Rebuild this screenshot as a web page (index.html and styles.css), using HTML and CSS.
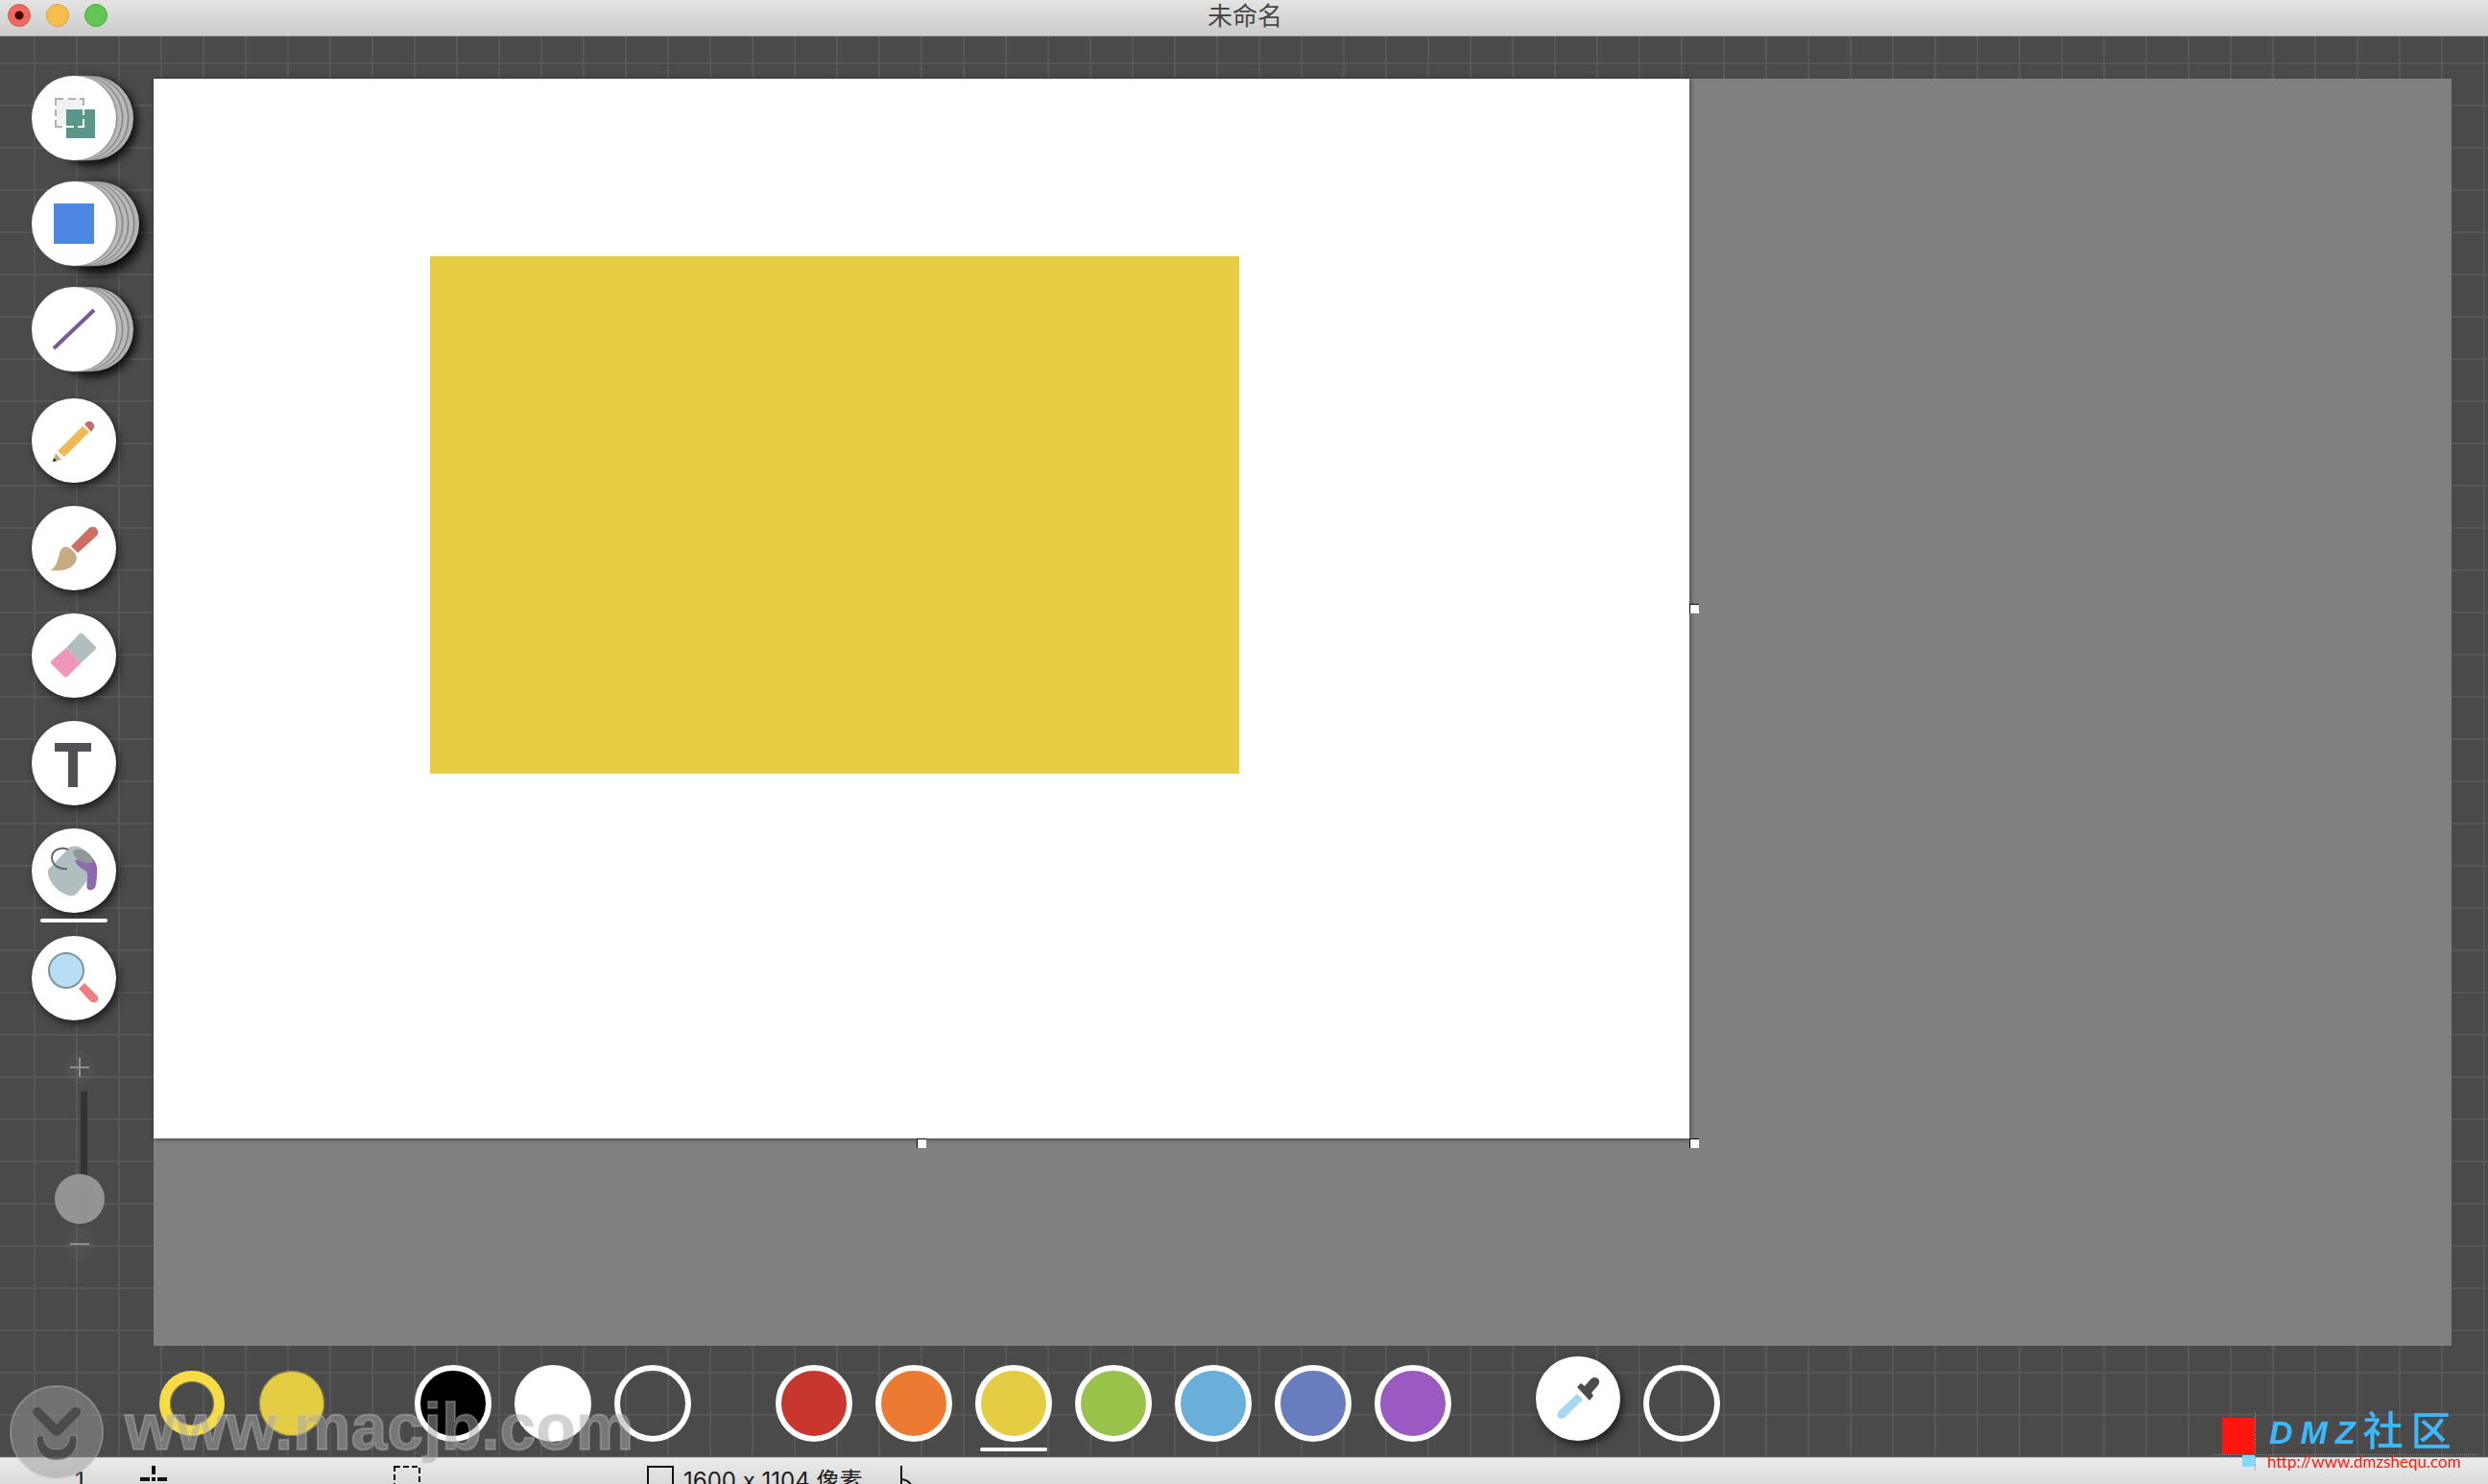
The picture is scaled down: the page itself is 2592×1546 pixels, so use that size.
FILE: index.html
```html
<!DOCTYPE html>
<html lang="zh-CN">
<head>
<meta charset="utf-8">
<title>未命名</title>
<link rel="stylesheet" href="styles.css">
</head>
<body>
<header class="titlebar">
  <div class="lights">
    <button class="light light-close" aria-label="关闭"></button>
    <button class="light light-min" aria-label="最小化"></button>
    <button class="light light-max" aria-label="缩放"></button>
  </div>
  <h1 class="title">未命名</h1>
</header>

<main class="workspace">
  <nav class="tools" aria-label="工具">
    <div class="tool-group stacks">
      <button class="tool stack" aria-label="选择">
        <svg viewBox="0 0 88 88"><rect x="25" y="24" width="28" height="27" fill="#eef2f2"/><path d="M36 35h30v30H36z" fill="#58978a"/><path d="M25 31v-7h8M38 24h8M50 24h4v7M25 35v7M25 46v7h7" fill="none" stroke="#a9b5b4" stroke-width="2"/><path d="M54 35v6M54 45v8h-6M44 53h-8" fill="none" stroke="#fff" stroke-width="2"/></svg>
      </button>
      <button class="tool stack stack-deep" aria-label="矩形">
        <svg viewBox="0 0 88 88"><path d="M23 23h42v42H23z" fill="#4f86e3"/></svg>
      </button>
      <button class="tool stack" aria-label="直线">
        <svg viewBox="0 0 88 88"><path d="M23 64 65 24" stroke="#7a5a95" stroke-width="4"/></svg>
      </button>
    </div>
    <div class="tool-group">
      <button class="tool" aria-label="铅笔">
        <svg viewBox="0 0 88 88"><path d="m27 55 26-26 7 6-26 26z" fill="#f0b954"/><path d="m55 27 2-2c4-4 11 3 7 7l-2 3z" fill="#c76d69"/><path d="m25 57 6 7-9 2z" fill="#c9a981"/><path d="m23 62 3 3-4 1z" fill="#222"/></svg>
      </button>
      <button class="tool" aria-label="画笔">
        <svg viewBox="0 0 88 88"><path d="m41 42 19-19c5-4 12 2 8 8L48 49z" fill="#cd6e65"/><path d="M29 49c2-8 9-8 14-2 6 5 4 11 0 15-6 6-17 6-24 5 6-2 8-9 10-18z" fill="#c8ab82"/></svg>
      </button>
      <button class="tool" aria-label="橡皮">
        <svg viewBox="0 0 88 88"><path d="M36 36 49 22q2-3 5 0l12 12q2 2 0 4L51 52z" fill="#b0bebf"/><path d="M36 36 51 52 38 65q-3 3-5 0L21 53q-2-2 0-4z" fill="#f096bb"/></svg>
      </button>
      <button class="tool" aria-label="文字">
        <svg viewBox="0 0 88 88"><path d="M24 23h38v9H48v37H38V32H24z" fill="#515156"/></svg>
      </button>
      <button class="tool active" aria-label="填充">
        <svg viewBox="0 0 88 88"><path d="M39 20q7-4 17 3c9 7 13 16 12 24l-9 6-12 15q-4 4-11 1C27 66 18 56 17 47q-1-4 3-7z" fill="#b0bebf"/><path d="M45 33c2 6 6 8 12 12 3 4-1 14 1 18q4 3 8-1c2-6 2-12 2-21-1-5-2-8-6-10z" fill="#8c6aae"/><path d="M43 24c3-6 20 0 21 11-7 3-20-1-21-11z" fill="#8f9898"/><path d="M38 22c-10-4-17 2-17 9 1 8 8 12 16 11" fill="none" stroke="#626769" stroke-width="2"/></svg>
      </button>
      <button class="tool" aria-label="放大镜">
        <svg viewBox="0 0 88 88"><circle cx="36" cy="36" r="18" fill="#b8def5" stroke="#809499" stroke-width="2"/><path d="m49 55 6-6 13 13c4 5-2 10-7 6z" fill="#ea817e"/></svg>
      </button>
    </div>
    <div class="zoom">
      <button class="zoom-step" aria-label="放大"><svg viewBox="0 0 34 34"><path d="M7 17h20M17 7v20"/></svg></button>
      <input class="zoom-range" type="range" min="0" max="100" value="0" aria-label="缩放级别">
      <button class="zoom-step" aria-label="缩小"><svg viewBox="0 0 34 34"><path d="M7 17h20"/></svg></button>
    </div>
  </nav>

  <section class="board" aria-label="画布">
    <div class="paper">
      <div class="shape"></div>
      <i class="handle handle-e"></i>
      <i class="handle handle-s"></i>
      <i class="handle handle-se"></i>
    </div>
  </section>

  <div class="palette">
    <div class="swatches">
      <button class="current current-stroke" aria-label="描边颜色"></button>
      <button class="current current-fill" aria-label="填充颜色"></button>
    </div>
    <div class="swatches">
      <button class="swatch black" aria-label="黑色"></button>
      <button class="swatch white" aria-label="白色"></button>
      <button class="swatch" aria-label="透明"></button>
    </div>
    <div class="swatches">
      <button class="swatch red" aria-label="红色"></button>
      <button class="swatch orange" aria-label="橙色"></button>
      <button class="swatch yellow active" aria-label="黄色"></button>
      <button class="swatch green" aria-label="绿色"></button>
      <button class="swatch sky" aria-label="天蓝"></button>
      <button class="swatch indigo" aria-label="靛蓝"></button>
      <button class="swatch purple" aria-label="紫色"></button>
    </div>
    <div class="swatches">
      <button class="tool picker" aria-label="吸管">
        <svg viewBox="0 0 88 88"><path d="m43 39 6 6-19 19-5 1-3-3 2-5z" fill="#a5d8f4"/><path d="m43 32 4-4 4 3 6-7c5-5 12 0 8 6l-7 8 2 3-4 5z" fill="#4b4b4d"/></svg>
      </button>
      <button class="swatch" aria-label="自定义颜色"></button>
    </div>
  </div>
</main>

<footer class="status">
  <span class="status-index">1</span>
  <svg class="status-icon icon-cross" viewBox="0 0 28 28"><path d="M14 0v9M14 12v4M14 19v9M0 14h10M18 14h10M12 14h4"/></svg>
  <svg class="status-icon icon-select" viewBox="0 0 28 28"><path d="M1 1h26v26H1z" stroke-dasharray="6 3"/></svg>
  <svg class="status-icon icon-size" viewBox="0 0 28 28"><path d="M1 1h26v26H1z"/></svg>
  <span class="status-size">1600 x 1104 像素</span>
  <svg class="status-icon icon-angle" viewBox="0 0 28 28"><path d="M2 0v27h26M2 14q11 1 12 13"/></svg>
</footer>

<div class="mark">
  <svg class="mark-logo" viewBox="0 0 98 98"><circle cx="49" cy="49" r="48" fill="#999" fill-opacity=".62" stroke="#ccc" stroke-opacity=".5" stroke-width="2"/><path d="m29 28 20 20 20-20" fill="none" stroke="#4c4c4c" stroke-width="10" stroke-linecap="round" stroke-linejoin="round"/><path d="M28 57q0-6 7-4 1 14 14 14t14-14q7-2 7 4c0 14-9 21-21 21s-21-7-21-21z" fill="#4c4c4c" stroke="#bbb" stroke-opacity=".5"/></svg>
  <span class="mark-text">www.macjb.com</span>
</div>

<div class="site">
  <i class="site-red"></i>
  <i class="site-blue"></i>
  <div class="site-name"><em>D</em><em>M</em><em>Z</em><span>社</span><span>区</span></div>
  <a class="site-url" href="http://www.dmzshequ.com">http://www.dmzshequ.com</a>
</div>
</body>
</html>
```

FILE: styles.css
```css
* { box-sizing: border-box; }

body {
  margin: 0;
  height: 100vh;
  display: flex;
  flex-direction: column;
  overflow: hidden;
  position: relative;
  background: #4a4a4a;
  font-family: Inter, "Noto Sans CJK SC", sans-serif;
}

button {
  appearance: none;
  border: 0;
  padding: 0;
  background: none;
  flex: none;
}

svg { display: block; }

/* Title bar */
.titlebar {
  flex: none;
  height: 38px;
  display: grid;
  grid-template-columns: 1fr auto 1fr;
  align-items: start;
  padding: 4px 8px 0;
  background: linear-gradient(#e4e4e4, #cccccc);
  border-bottom: 1px solid #a4a4a4;
}

.lights { display: flex; gap: 16px; }

.light {
  width: 24px;
  height: 24px;
  border-radius: 50%;
  border: 1px solid #d8544c;
  background: #ee6a60;
}

.light-close { background: radial-gradient(circle, #4c0000 4px, #ee6a60 5px); }
.light-min { background: #f5bf4f; border-color: #d9a33c; }
.light-max { background: #61c654; border-color: #4fa73f; }

.title {
  margin: 0;
  padding-left: 2px;
  font-size: 26px;
  line-height: 26px;
  font-weight: 400;
  color: #484848;
}

/* Workspace */
.workspace {
  flex: 1;
  min-height: 0;
  display: grid;
  grid-template-columns: 160px 1fr;
  grid-template-rows: 1fr 116px;
  padding: 44px 38px 0 0;
  background:
    repeating-linear-gradient(90deg, transparent 0 35px, #575757 35px 37px, transparent 37px 44px),
    repeating-linear-gradient(transparent 0 27px, #575757 27px 29px, transparent 29px 44px),
    #4a4a4a;
}

.tools {
  grid-row: 1 / 3;
  margin-top: -3px;
  padding-left: 33px;
  display: flex;
  flex-direction: column;
  gap: 28px;
}

.tool-group { display: flex; flex-direction: column; gap: 24px; }
.stacks { gap: 22px; }

.tool {
  position: relative;
  width: 88px;
  height: 88px;
  border-radius: 50%;
  background: #fff;
  box-shadow: 3px 4px 8px rgba(0, 0, 0, 0.6);
}

.stack {
  box-shadow:
    1px 0 2px #777,
    6px 0 0 #bcbcbc,
    7px 0 2px #666,
    12px 0 0 #bcbcbc,
    13px 0 2px #666,
    18px 0 0 #b4b4b4,
    20px 4px 9px 2px rgba(0, 0, 0, 0.8);
}

.stack-deep {
  box-shadow:
    1px 0 2px #777,
    6px 0 0 #bcbcbc,
    7px 0 2px #666,
    12px 0 0 #bcbcbc,
    13px 0 2px #666,
    18px 0 0 #bcbcbc,
    19px 0 2px #666,
    24px 0 0 #b4b4b4,
    26px 5px 12px 3px rgba(0, 0, 0, 0.9);
}

.active { position: relative; }

.active::after {
  content: "";
  position: absolute;
  left: 50%;
  bottom: -10px;
  width: 70px;
  height: 4px;
  margin-left: -35px;
  border-radius: 2px;
  background: #fff;
}

.swatch.active::after { bottom: -16px; }

/* Zoom control */
.zoom {
  display: flex;
  flex-direction: column;
  align-items: center;
  gap: 4px;
  width: 100px;
  margin-top: 4px;
}

.zoom-step {
  width: 34px;
  height: 34px;
  border-radius: 50%;
  background: rgba(255, 255, 255, 0.03);
}

.zoom-step path { stroke: #8f8f8f; stroke-width: 2; }

.zoom-range {
  appearance: none;
  writing-mode: vertical-lr;
  direction: rtl;
  width: 52px;
  height: 142px;
  margin: 0;
  background: linear-gradient(#333, #333) 27px 4px / 7px 134px no-repeat;
}

.zoom-range::-webkit-slider-thumb {
  appearance: none;
  width: 52px;
  height: 52px;
  border-radius: 50%;
  background: rgba(156, 156, 156, 0.9);
}

/* Canvas */
.board { background: #808080; }

.paper {
  position: relative;
  width: 1600px;
  height: 1104px;
  background: #fff;
  box-shadow: 1px 1px 5px rgba(0, 0, 0, 0.5);
}

.shape {
  position: absolute;
  left: 288px;
  top: 185px;
  width: 843px;
  height: 539px;
  background: #e6cd43;
}

.handle {
  position: absolute;
  width: 10px;
  height: 10px;
  background: #fff;
  border-top: 1px solid #000;
  border-left: 1px solid #000;
}

.handle-e { left: 100%; top: 50%; margin-top: -5px; }
.handle-s { left: 50%; top: 100%; margin-left: -5px; }
.handle-se { left: 100%; top: 100%; }

/* Palette */
.palette {
  display: flex;
  gap: 88px;
  padding: 20px 0 0 6px;
}

.swatches { display: flex; gap: 24px; }

.swatch {
  width: 80px;
  height: 80px;
  border-radius: 50%;
  border: 6px solid #fff;
}

.black { background: #000; }
.white { background: #fff; }
.red { background: #c7372d; }
.orange { background: #ec7a33; }
.yellow { background: #e5cd43; }
.green { background: #99c24a; }
.sky { background: #6aaeda; }
.indigo { background: #697cbd; }
.purple { background: #9a5ac1; }

.current {
  width: 68px;
  height: 68px;
  margin-top: 6px;
  border-radius: 50%;
}

.swatches:first-child { gap: 36px; margin-right: 6px; }

.current-stroke {
  border: 11px solid #f5dc47;
  box-shadow: inset 0 0 0 1px #8a7f55;
}

.current-fill {
  background: #e5cd43;
  box-shadow: inset 0 0 0 1px #8a7f55;
}

.picker { margin-top: -9px; }

/* Status bar */
.status {
  flex: none;
  height: 28px;
  display: flex;
  align-items: flex-start;
  padding: 8px 0 0 78px;
  overflow: hidden;
  background: linear-gradient(#ebebeb, #dadada);
  border-top: 1px solid #c4c4c4;
  color: #1c1c1c;
  font-size: 24px;
  line-height: 32px;
  font-feature-settings: "calt" 0;
}

.status-index { width: 68px; }

.status-icon {
  flex: none;
  width: 28px;
  height: 28px;
  fill: none;
  stroke: #111;
  stroke-width: 2;
}

.icon-cross { stroke-width: 4; margin-right: 236px; }
.icon-select { margin-right: 236px; }
.icon-size { margin-right: 10px; }
.status-size { width: 225px; white-space: nowrap; }

/* Overlaid marks */
.mark {
  position: absolute;
  left: 10px;
  bottom: 5px;
  display: flex;
  align-items: center;
  gap: 22px;
}

.mark-logo { width: 98px; height: 98px; opacity: 0.8; }

.mark-text {
  padding-bottom: 12px;
  font: bold 68px/80px "Liberation Sans", sans-serif;
  color: rgba(165, 165, 165, 0.5);
  -webkit-text-stroke: 2px rgba(210, 210, 210, 0.3);
}

.site {
  position: absolute;
  right: 10px;
  bottom: 14px;
  width: 277px;
  height: 61px;
  padding: 0 0 0 57px;
  background:
    repeating-linear-gradient(90deg, #8a8a8a 0 1px, transparent 1px 2px) 0 44px / 277px 1px no-repeat,
    repeating-linear-gradient(#8a8a8a 0 1px, transparent 1px 2px) 44px 0 / 1px 61px no-repeat;
}

.site-red, .site-blue { position: absolute; }
.site-red { left: 10px; top: 6px; width: 34px; height: 38px; background: #ff170d; }
.site-blue { left: 31px; top: 45px; width: 13px; height: 12px; background: #85d8ff; }

.site-name {
  display: flex;
  align-items: center;
  gap: 8px;
  height: 42px;
  padding-left: 2px;
  color: #3cb9fb;
  font: bold 34px/42px "Liberation Sans", "Noto Sans CJK SC", sans-serif;
}

.site-name span { font-size: 42px; font-weight: 500; }

.site-url {
  display: block;
  font: 17px/20px Lato, sans-serif;
  color: #ff170d;
  text-decoration: none;
  white-space: nowrap;
}
```
